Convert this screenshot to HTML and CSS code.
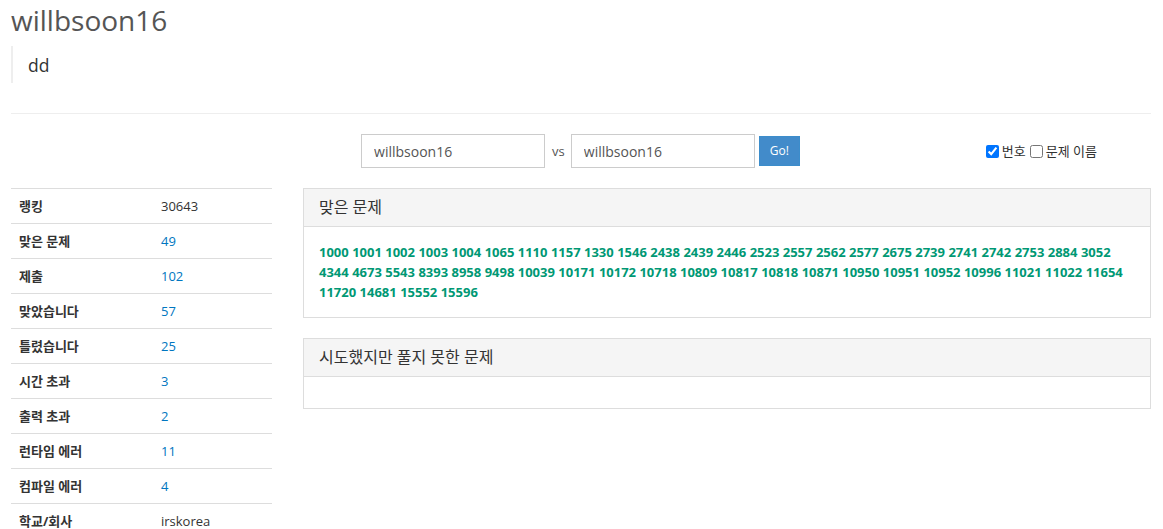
FILE: index.html
```html
<!DOCTYPE html>
<html lang="ko">
  <head>
    <meta charset="UTF-8" />
    <meta name="viewport" content="width=device-width, initial-scale=1.0" />
    <title>willbsoon16 정보</title>
    <link rel="stylesheet" href="styles.css">
  </head>
  <body>
    <div class="container">
      <div class="page-header">
        <h1>willbsoon16</h1>
        <blockquote>dd</blockquote>
      </div>

      <div class="compare-row">
        <div></div>
        <form class="compare-form">
          <input type="text" value="willbsoon16" />
          <span class="vs">vs</span>
          <input type="text" value="willbsoon16" />
          <button type="button" class="btn-go">Go!</button>
        </form>
        <div class="view-options">
          <label><input type="checkbox" checked /> 번호</label>
          <label><input type="checkbox" /> 문제 이름</label>
        </div>
      </div>

      <div class="main-row">
        <div class="side">
          <table class="stats">
            <tr><th>랭킹</th><td>30643</td></tr>
            <tr><th>맞은 문제</th><td><a href="#">49</a></td></tr>
            <tr><th>제출</th><td><a href="#">102</a></td></tr>
            <tr><th>맞았습니다</th><td><a href="#">57</a></td></tr>
            <tr><th>틀렸습니다</th><td><a href="#">25</a></td></tr>
            <tr><th>시간 초과</th><td><a href="#">3</a></td></tr>
            <tr><th>출력 초과</th><td><a href="#">2</a></td></tr>
            <tr><th>런타임 에러</th><td><a href="#">11</a></td></tr>
            <tr><th>컴파일 에러</th><td><a href="#">4</a></td></tr>
            <tr><th>학교/회사</th><td>irskorea</td></tr>
          </table>
        </div>

        <div class="content">
          <div class="panel">
            <div class="panel-heading">맞은 문제</div>
            <div class="panel-body problem-list">
              <a href="#">1000</a> <a href="#">1001</a> <a href="#">1002</a> <a href="#">1003</a> <a href="#">1004</a> <a href="#">1065</a> <a href="#">1110</a> <a href="#">1157</a> <a href="#">1330</a> <a href="#">1546</a> <a href="#">2438</a> <a href="#">2439</a> <a href="#">2446</a> <a href="#">2523</a> <a href="#">2557</a> <a href="#">2562</a> <a href="#">2577</a> <a href="#">2675</a> <a href="#">2739</a> <a href="#">2741</a> <a href="#">2742</a> <a href="#">2753</a> <a href="#">2884</a> <a href="#">3052</a>
              <a href="#">4344</a> <a href="#">4673</a> <a href="#">5543</a> <a href="#">8393</a> <a href="#">8958</a> <a href="#">9498</a> <a href="#">10039</a> <a href="#">10171</a> <a href="#">10172</a> <a href="#">10718</a> <a href="#">10809</a> <a href="#">10817</a> <a href="#">10818</a> <a href="#">10871</a> <a href="#">10950</a> <a href="#">10951</a> <a href="#">10952</a> <a href="#">10996</a> <a href="#">11021</a> <a href="#">11022</a> <a href="#">11654</a>
              <a href="#">11720</a> <a href="#">14681</a> <a href="#">15552</a> <a href="#">15596</a>
            </div>
          </div>

          <div class="panel">
            <div class="panel-heading">시도했지만 풀지 못한 문제</div>
            <div class="panel-body"></div>
          </div>
        </div>
      </div>
    </div>
  </body>
</html>
```

FILE: styles.css
```css
body {
  margin: 0;
  font-family: "Open Sans", "Noto Sans CJK KR", sans-serif;
  font-size: 13px;
  line-height: 1.42857;
  color: #333;
  background: #fff;
}

a {
  color: #0076c0;
  text-decoration: none;
}

.container {
  padding: 0 12px 0 11px;
}

.page-header {
  padding-bottom: 30px;
  border-bottom: 1px solid #eee;
  margin-bottom: 20px;
}

.page-header h1 {
  margin: 0;
  padding-top: 2px;
  font-size: 28px;
  font-weight: 400;
  line-height: 36px;
  color: #555;
}

.page-header blockquote {
  margin: 8px 0 0;
  padding: 8px 15px 6px;
  border-left: 2px solid #eee;
  font-size: 17.5px;
  line-height: 23px;
  color: #333;
}

.compare-row {
  display: grid;
  grid-template-columns: 1fr auto 1fr;
  align-items: center;
  margin-bottom: 20px;
}

.compare-form {
  display: flex;
  align-items: center;
  margin-right: 1px;
}

.compare-form input {
  width: 184px;
  height: 34px;
  box-sizing: border-box;
  padding: 6px 12px;
  border: 1px solid #ccc;
  font: inherit;
  font-size: 14px;
  color: #555;
}

.vs {
  margin: 0 6px 0 7px;
  font-size: 13px;
  color: #555;
}

.btn-go {
  margin-left: 4px;
  height: 30px;
  padding: 0 10px;
  border: 1px solid #3c8dcb;
  background: #428bca;
  color: #fff;
  font: inherit;
  font-size: 12px;
}

.view-options {
  justify-self: end;
  margin-right: 54px;
  display: flex;
  gap: 4px;
  font-size: 13px;
  color: #333;
}

.view-options label {
  display: flex;
  align-items: center;
}

.view-options input {
  margin: 0 3px 0 0;
  width: 13px;
  height: 13px;
}

.main-row {
  display: flex;
  gap: 31px;
}

.side {
  width: 261px;
  flex: none;
}

.stats {
  width: 100%;
  border-collapse: collapse;
}

.stats th,
.stats td {
  padding: 8px 8px;
  height: 18px;
  line-height: 18px;
  border-top: 1px solid #ddd;
  text-align: left;
  vertical-align: top;
}

.stats th {
  width: 126px;
  font-weight: 700;
}

.content {
  flex: 1;
}

.panel {
  border: 1px solid #ddd;
  margin-bottom: 20px;
}

.panel-heading {
  padding: 10px 15px;
  background: #f5f5f5;
  border-bottom: 1px solid #ddd;
  font-size: 16px;
  line-height: 17px;
  color: #333;
}

.panel-body {
  padding: 15px;
  min-height: 1px;
}

.problem-list {
  line-height: 20px;
}

.problem-list a {
  color: #009874;
  font-weight: 700;
}
```
